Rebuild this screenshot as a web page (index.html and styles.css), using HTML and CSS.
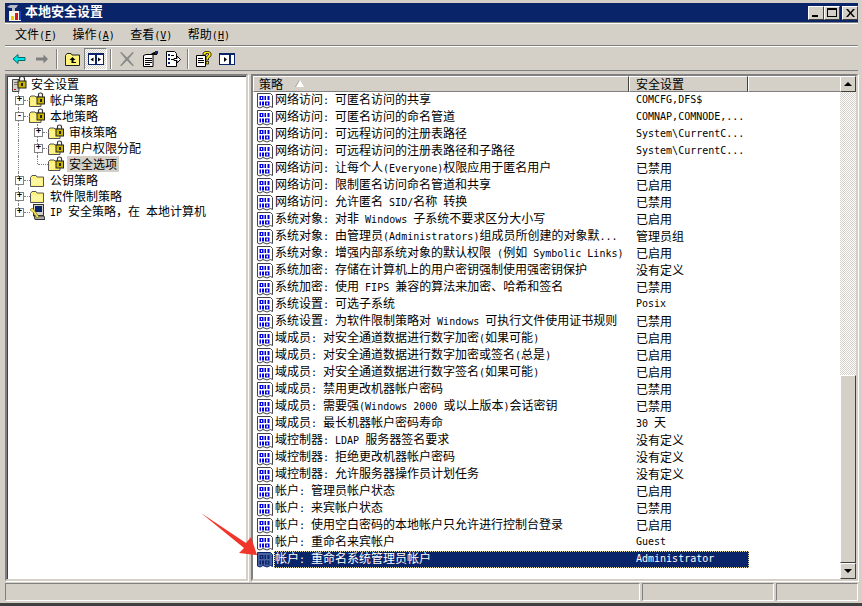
FILE: index.html
```html
<!DOCTYPE html>
<html lang="zh-CN">
<head>
<meta charset="utf-8">
<title>本地安全设置</title>
<link rel="stylesheet" href="styles.css">
</head>
<body>
<svg class="defs" width="0" height="0">
  <symbol id="item" viewBox="0 0 16 16">
    <path d="M.5 .5H13.500L15.500 2.500V14.500L13.500 13.500L10 15L6 13.500L3 15L.5 14Z" fill="var(--paper)" stroke="var(--edge)"/>
    <path d="M3 2.500h4v4H3z M4.500 3.500v2h1v-2z" fill="var(--ink)" fill-rule="evenodd" transform="translate(-.5 .5)"/>
    <path d="M7.500 3h1.500v4H7.500zM10.500 3h2v4h-2z" fill="var(--ink)"/>
    <path d="M2.500 8.500h1.500v4H2.500zM5 8.500h2v4H5z" fill="var(--ink)"/>
    <path d="M8 8.500h4.500v4H8z M9.500 9.500v2h1.500v-2z" fill="var(--ink)" fill-rule="evenodd"/>
  </symbol>
  <symbol id="lockfolder" viewBox="0 0 16 16">
    <path d="M.5 5.500L2 4H6L7 5H12V14.500H.5Z" fill="#ffef70" stroke="#555"/>
    <path d="M2 7h9v6H2z" fill="#fff48c"/>
    <path d="M9.500 5V2.500Q9.500 1 11.500 1T13.500 2.500V5" fill="none" stroke="#333" stroke-width="1.200"/>
    <rect x="8" y="5" width="7.500" height="7" fill="#c8b400" stroke="#222"/>
    <rect x="11" y="7" width="2" height="3" fill="#222"/>
  </symbol>
  <symbol id="folder" viewBox="0 0 16 16">
    <path d="M1.500 5.500L3 3.500H7L8 5H14.500V14.500H1.500Z" fill="#fff27a" stroke="#555"/>
    <path d="M3 7h10v6H3z" fill="#fdf6a0"/>
  </symbol>
  <symbol id="root" viewBox="0 0 16 16">
    <path d="M.5 3.500H7V15.500H.5Z" fill="#d4d0c8" stroke="#444"/>
    <path d="M2 6h4v1H2zM2 8h4v1H2z" fill="#777"/>
    <rect x="2" y="13" width="2" height="1" fill="#d00"/>
    <path d="M7.500 5V2.500Q7.500 .5 10 .5T12.500 2.500V5" fill="none" stroke="#333" stroke-width="1.200"/>
    <rect x="6" y="5" width="8" height="7" fill="#c8b400" stroke="#222"/>
    <rect x="9" y="7" width="2" height="3" fill="#222"/>
  </symbol>
  <symbol id="comp" viewBox="0 0 16 16">
    <rect x="4.500" y=".5" width="10" height="11" fill="#d4d0c8" stroke="#333"/>
    <rect x="6" y="2" width="7" height="6" fill="#0a246a"/>
    <path d="M5 12H15L16 15.500H6Z" fill="#aaa" stroke="#333"/>
    <path d="M1 6L3 4L5 6L10 13L8 14L4 8Z" fill="#ffe84a" stroke="#776600" stroke-width=".6"/>
  </symbol>
</svg>

<div class="window">
  <header class="title">
    <svg class="title-icon" width="17" height="17" viewBox="0 0 17 17">
      <path d="M1 3L4 1H12L10 4H9V8H6V4H4Z" fill="#b4bac8"/>
      <path d="M3 7h12v10H3z" fill="#f8f6e8"/>
      <path d="M5 12h3v4H5z" fill="#e8c800"/>
      <path d="M9 9h3v7H9z" fill="#d81818"/>
      <path d="M13 7h2v9h-2z" fill="#203ec0"/>
    </svg>
    <span class="title-text">本地安全设置</span>
    <div class="caption">
      <button class="cap cap-min"><i></i></button>
      <button class="cap cap-max"><i></i></button>
      <button class="cap cap-close">
        <svg width="9" height="8" viewBox="0 0 9 8"><path d="M0 0h2l2.500 3L7 0h2L5.500 4 9 8H7L4.500 5 2 8H0l3.500-4z" fill="#000"/></svg>
      </button>
    </div>
  </header>

  <nav class="menu">
    <span class="menu-item">文件<span class="l">(<u>F</u>)</span></span>
    <span class="menu-item">操作<span class="l">(<u>A</u>)</span></span>
    <span class="menu-item">查看<span class="l">(<u>V</u>)</span></span>
    <span class="menu-item">帮助<span class="l">(<u>H</u>)</span></span>
  </nav>

  <div class="toolbar">
    <span class="tool">
      <svg width="16" height="16" viewBox="0 0 16 16"><path d="M2 8L7 3.500V6.500H14V9.500H7V12.500Z" fill="#00e4e4" stroke="#006a6a"/></svg>
    </span>
    <span class="tool">
      <svg width="16" height="16" viewBox="0 0 16 16"><path d="M14 8L9.500 3.500V6.500H2V9.500H9.500V12.500Z" fill="#808080"/></svg>
    </span>
    <span class="sep"></span>
    <span class="tool">
      <svg width="16" height="16" viewBox="0 0 16 16"><path d="M.5 4.500L2 2.500H6L7 4H14.500V14.500H.5Z" fill="#fff27a" stroke="#222"/><path d="M7.500 6L4.500 9H6.500V12H11V11H8.500V9H10.500Z" fill="#000"/></svg>
    </span>
    <span class="tool tool-on">
      <svg width="16" height="16" viewBox="0 0 16 16"><rect x=".5" y="2.500" width="15" height="11" fill="#fff" stroke="#0a246a"/><path d="M0 2h16v2H0zM7 2h2v12H7z" fill="#0a246a"/><path d="M5.500 6.500v4l-3-2zM10 6.500v4l3-2z" fill="#000"/></svg>
    </span>
    <span class="sep"></span>
    <span class="tool">
      <svg width="16" height="16" viewBox="0 0 16 16"><path d="M1 1.500L2.500 1L8 6.500L13.500 1L15 1.500L9.500 8L15 14.500L13.500 15L8 9.500L2.500 15L1 14.500L6.500 8Z" fill="#8a8a8a"/></svg>
    </span>
    <span class="tool">
      <svg width="16" height="16" viewBox="0 0 16 16"><path d="M1.500 4.500L4 3.500H11V15.500H1.500Z" fill="#fff" stroke="#000"/><path d="M3 7h7v1H3zM3 9h7v1H3zM3 11h7v1H3zM3 13h5v1H3z" fill="#000"/><path d="M8 3.500L12 1H15V4H12.500" fill="#000"/><rect x="13" y="0" width="3" height="3" fill="#0a246a"/></svg>
    </span>
    <span class="tool">
      <svg width="16" height="16" viewBox="0 0 16 16"><path d="M1.500 .5H9.500L11.500 2.500V15.500H1.500Z" fill="#fff" stroke="#000"/><path d="M3 3h2v2H3zM3 7h2v2H3zM3 11h2v2H3z" fill="#0a246a"/><path d="M6 4h3v1H6zM6 8h3v1H6z" fill="#000"/><path d="M9 7.500H12V5L15.500 8.500L12 12V9.500H9Z" fill="#fff" stroke="#000"/></svg>
    </span>
    <span class="sep"></span>
    <span class="tool">
      <svg width="16" height="16" viewBox="0 0 16 16"><path d="M.5 4.500H9.500V15.500H.5Z" fill="#fff" stroke="#000"/><path d="M2 7h5v1H2zM2 9h6v1H2zM2 11h6v1H2z" fill="#000"/><path d="M7 4V2L9 .5H13L15 2V5L12.500 7V9H10V6L12.500 4V2.500H10V4Z" fill="#ffe800" stroke="#000" stroke-width=".7"/><rect x="10" y="10.500" width="2.500" height="2.500" fill="#ffe800" stroke="#000" stroke-width=".7"/></svg>
    </span>
    <span class="tool">
      <svg width="16" height="16" viewBox="0 0 16 16"><rect x=".5" y="2.500" width="15" height="11" fill="#fff" stroke="#0a246a"/><path d="M0 2h16v2H0zM10 2h2v12h-2z" fill="#0a246a"/><path d="M5 6v5l3-2.500z" fill="#000"/></svg>
    </span>
  </div>

  <main class="panes">
    <aside class="pane tree">
      <div class="node lvl0">
        <svg class="ticon"><use href="#root"/></svg><span class="label">安全设置</span>
      </div>
      <div class="node lvl1 vline">
        <span class="box">+</span><svg class="ticon"><use href="#lockfolder"/></svg><span class="label">帐户策略</span>
      </div>
      <div class="node lvl1 vline">
        <span class="box">-</span><svg class="ticon"><use href="#lockfolder"/></svg><span class="label">本地策略</span>
      </div>
      <div class="node lvl2 vline vline2">
        <span class="box">+</span><svg class="ticon"><use href="#lockfolder"/></svg><span class="label">审核策略</span>
      </div>
      <div class="node lvl2 vline vline2">
        <span class="box">+</span><svg class="ticon"><use href="#lockfolder"/></svg><span class="label">用户权限分配</span>
      </div>
      <div class="node lvl2 vline vline2 last">
        <span class="nobox"></span><svg class="ticon"><use href="#lockfolder"/></svg><span class="label label-sel">安全选项</span>
      </div>
      <div class="node lvl1 vline">
        <span class="box">+</span><svg class="ticon"><use href="#folder"/></svg><span class="label">公钥策略</span>
      </div>
      <div class="node lvl1 vline">
        <span class="box">+</span><svg class="ticon"><use href="#folder"/></svg><span class="label">软件限制策略</span>
      </div>
      <div class="node lvl1 vline last">
        <span class="box">+</span><svg class="ticon"><use href="#comp"/></svg><span class="label"><span class="l">IP </span>安全策略，在<span class="l"> </span>本地计算机</span>
      </div>
    </aside>

    <section class="pane detail">
      <div class="content">
        <div class="head">
          <div class="hcell hcell-name">策略<span class="sort"></span></div>
          <div class="hcell hcell-val">安全设置</div>
          <div class="hcell hcell-rest"></div>
        </div>
        <div class="rows">
          <div class="row"><svg class="ico"><use href="#item"/></svg><div class="cells"><span class="name">网络访问<span class="l">: </span>可匿名访问的共享</span><span class="val l">COMCFG,DFS$</span></div></div>
          <div class="row"><svg class="ico"><use href="#item"/></svg><div class="cells"><span class="name">网络访问<span class="l">: </span>可匿名访问的命名管道</span><span class="val l">COMNAP,COMNODE,...</span></div></div>
          <div class="row"><svg class="ico"><use href="#item"/></svg><div class="cells"><span class="name">网络访问<span class="l">: </span>可远程访问的注册表路径</span><span class="val l">System\CurrentC...</span></div></div>
          <div class="row"><svg class="ico"><use href="#item"/></svg><div class="cells"><span class="name">网络访问<span class="l">: </span>可远程访问的注册表路径和子路径</span><span class="val l">System\CurrentC...</span></div></div>
          <div class="row"><svg class="ico"><use href="#item"/></svg><div class="cells"><span class="name">网络访问<span class="l">: </span>让每个人<span class="l">(Everyone)</span>权限应用于匿名用户</span><span class="val">已禁用</span></div></div>
          <div class="row"><svg class="ico"><use href="#item"/></svg><div class="cells"><span class="name">网络访问<span class="l">: </span>限制匿名访问命名管道和共享</span><span class="val">已启用</span></div></div>
          <div class="row"><svg class="ico"><use href="#item"/></svg><div class="cells"><span class="name">网络访问<span class="l">: </span>允许匿名<span class="l"> SID/</span>名称<span class="l"> </span>转换</span><span class="val">已禁用</span></div></div>
          <div class="row"><svg class="ico"><use href="#item"/></svg><div class="cells"><span class="name">系统对象<span class="l">: </span>对非<span class="l"> Windows </span>子系统不要求区分大小写</span><span class="val">已启用</span></div></div>
          <div class="row"><svg class="ico"><use href="#item"/></svg><div class="cells"><span class="name">系统对象<span class="l">: </span>由管理员<span class="l">(Administrators)</span>组成员所创建的对象默<span class="l">...</span></span><span class="val">管理员组</span></div></div>
          <div class="row"><svg class="ico"><use href="#item"/></svg><div class="cells"><span class="name">系统对象<span class="l">: </span>增强内部系统对象的默认权限<span class="l"> (</span>例如<span class="l"> Symbolic Links)</span></span><span class="val">已启用</span></div></div>
          <div class="row"><svg class="ico"><use href="#item"/></svg><div class="cells"><span class="name">系统加密<span class="l">: </span>存储在计算机上的用户密钥强制使用强密钥保护</span><span class="val">没有定义</span></div></div>
          <div class="row"><svg class="ico"><use href="#item"/></svg><div class="cells"><span class="name">系统加密<span class="l">: </span>使用<span class="l"> FIPS </span>兼容的算法来加密、哈希和签名</span><span class="val">已禁用</span></div></div>
          <div class="row"><svg class="ico"><use href="#item"/></svg><div class="cells"><span class="name">系统设置<span class="l">: </span>可选子系统</span><span class="val l">Posix</span></div></div>
          <div class="row"><svg class="ico"><use href="#item"/></svg><div class="cells"><span class="name">系统设置<span class="l">: </span>为软件限制策略对<span class="l"> Windows </span>可执行文件使用证书规则</span><span class="val">已禁用</span></div></div>
          <div class="row"><svg class="ico"><use href="#item"/></svg><div class="cells"><span class="name">域成员<span class="l">: </span>对安全通道数据进行数字加密<span class="l">(</span>如果可能<span class="l">)</span></span><span class="val">已启用</span></div></div>
          <div class="row"><svg class="ico"><use href="#item"/></svg><div class="cells"><span class="name">域成员<span class="l">: </span>对安全通道数据进行数字加密或签名<span class="l">(</span>总是<span class="l">)</span></span><span class="val">已启用</span></div></div>
          <div class="row"><svg class="ico"><use href="#item"/></svg><div class="cells"><span class="name">域成员<span class="l">: </span>对安全通道数据进行数字签名<span class="l">(</span>如果可能<span class="l">)</span></span><span class="val">已启用</span></div></div>
          <div class="row"><svg class="ico"><use href="#item"/></svg><div class="cells"><span class="name">域成员<span class="l">: </span>禁用更改机器帐户密码</span><span class="val">已禁用</span></div></div>
          <div class="row"><svg class="ico"><use href="#item"/></svg><div class="cells"><span class="name">域成员<span class="l">: </span>需要强<span class="l">(Windows 2000 </span>或以上版本<span class="l">)</span>会话密钥</span><span class="val">已禁用</span></div></div>
          <div class="row"><svg class="ico"><use href="#item"/></svg><div class="cells"><span class="name">域成员<span class="l">: </span>最长机器帐户密码寿命</span><span class="val"><span class="l">30 </span>天</span></div></div>
          <div class="row"><svg class="ico"><use href="#item"/></svg><div class="cells"><span class="name">域控制器<span class="l">: LDAP </span>服务器签名要求</span><span class="val">没有定义</span></div></div>
          <div class="row"><svg class="ico"><use href="#item"/></svg><div class="cells"><span class="name">域控制器<span class="l">: </span>拒绝更改机器帐户密码</span><span class="val">没有定义</span></div></div>
          <div class="row"><svg class="ico"><use href="#item"/></svg><div class="cells"><span class="name">域控制器<span class="l">: </span>允许服务器操作员计划任务</span><span class="val">没有定义</span></div></div>
          <div class="row"><svg class="ico"><use href="#item"/></svg><div class="cells"><span class="name">帐户<span class="l">: </span>管理员帐户状态</span><span class="val">已启用</span></div></div>
          <div class="row"><svg class="ico"><use href="#item"/></svg><div class="cells"><span class="name">帐户<span class="l">: </span>来宾帐户状态</span><span class="val">已禁用</span></div></div>
          <div class="row"><svg class="ico"><use href="#item"/></svg><div class="cells"><span class="name">帐户<span class="l">: </span>使用空白密码的本地帐户只允许进行控制台登录</span><span class="val">已启用</span></div></div>
          <div class="row"><svg class="ico"><use href="#item"/></svg><div class="cells"><span class="name">帐户<span class="l">: </span>重命名来宾帐户</span><span class="val l">Guest</span></div></div>
          <div class="row sel"><svg class="ico"><use href="#item"/></svg><div class="cells"><span class="name">帐户<span class="l">: </span>重命名系统管理员帐户</span><span class="val l">Administrator</span></div></div>
        </div>
      </div>
      <div class="vscroll">
        <div class="sbtn"><b class="up"></b></div>
        <div class="track"></div>
        <div class="thumb"></div>
        <div class="sbtn"><b class="down"></b></div>
      </div>
    </section>
  </main>

  <footer class="status">
    <div class="panel panel-a"></div>
    <div class="panel panel-b"></div>
    <div class="panel panel-c"></div>
  </footer>

  <svg class="arrow" width="60" height="46" viewBox="0 0 60 46">
    <path d="M1 1L46 31L51 25L57 43L39 41L44 36Z" fill="#f0352a"/>
  </svg>
</div>
</body>
</html>
```

FILE: styles.css
```css
* { box-sizing: border-box; }
html, body { margin: 0; padding: 0; }
body {
  width: 862px;
  height: 606px;
  overflow: hidden;
  font-family: "Noto Sans CJK SC", "Liberation Sans", sans-serif;
  font-size: 12px;
  color: #000;
  background: #d4d0c8;
}
.defs { position: absolute; }
.l { font-family: "DejaVu Sans Mono", "Liberation Mono", monospace; font-size: 10px; white-space: pre; }

.window {
  position: relative;
  width: 862px;
  height: 606px;
  padding: 3px 4px 0 5px;
  display: flex;
  flex-direction: column;
  background: #d4d0c8;
  border-bottom: 3px solid #404040;
}

/* title */
.title {
  height: 19px;
  flex: none;
  display: flex;
  align-items: center;
  background: #0a246a;
  color: #fff;
}
.title-icon { margin-left: 1px; flex: none; }
.title-text { margin-left: 2px; padding-bottom: 3px; font-size: 13px; font-weight: 700; line-height: 18px; }
.caption { margin-left: auto; display: flex; }
.cap {
  width: 16px;
  height: 14px;
  padding: 0;
  background: #d4d0c8;
  border: 1px solid;
  border-color: #fff #404040 #404040 #fff;
  display: flex;
  align-items: center;
  justify-content: center;
}
.cap-close { margin-left: 2px; }
.cap-min i { width: 6px; height: 2px; background: #000; margin-top: 6px; margin-right: 2px; }
.cap-max i { width: 10px; height: 9px; border: 1px solid #000; border-top-width: 2px; }

/* menu */
.menu {
  height: 24px;
  flex: none;
  display: flex;
  align-items: center;
  padding: 1px 0 0 10px;
  gap: 15.5px;
  border-top: 1px solid #808080;
  box-shadow: inset 0 1px 0 #fff;
  border-bottom: 1px solid #808080;
}
.menu-item { line-height: 16px; white-space: pre; }

/* toolbar */
.toolbar {
  height: 25px;
  flex: none;
  display: flex;
  align-items: center;
  padding-left: 2px;
  border-top: 1px solid #fff;
  border-bottom: 1px solid #808080;
}
.tool {
  width: 23px;
  height: 22px;
  flex: none;
  display: flex;
  align-items: center;
  justify-content: center;
}
.tool-on {
  border: 1px solid;
  border-color: #808080 #fff #fff #808080;
  background: repeating-conic-gradient(#fff 0 25%, #d4d0c8 0 50%) 0 0 / 2px 2px;
}
.sep {
  width: 2px;
  height: 20px;
  flex: none;
  margin: 0 3px;
  border-left: 1px solid #808080;
  border-right: 1px solid #fff;
}

/* panes */
.panes {
  height: 507px;
  margin-top: 3px;
  flex: none;
  display: flex;
  gap: 3px;
}
.pane {
  background: #fff;
  border: 2px solid;
  border-color: #808080 #d4d0c8 #d4d0c8 #808080;
  box-shadow: inset 1px 1px 0 #404040, 1px 1px 0 #fff;
}
.tree {
  width: 243px;
  padding: 0 0 0 5px;
  flex: none;
}
.node {
  position: relative;
  height: 16px;
  display: flex;
  align-items: center;
  white-space: pre;
}
.lvl1 { padding-left: 3px; }
.lvl2 { padding-left: 22px; }
.ticon { width: 16px; height: 16px; flex: none; }
.label { margin-left: 3px; padding: 0 2px; line-height: 16px; }
.lvl0 .label { margin-left: 1px; }
.label-sel { background: #d4d0c8; }
.box {
  position: relative;
  width: 9px;
  height: 9px;
  flex: none;
  margin-right: 5px;
  border: 1px solid #808080;
  background: #fff;
  font: 700 9px/6px "Liberation Mono", monospace;
  text-align: center;
  z-index: 1;
}
.box::after {
  content: "";
  position: absolute;
  left: 8px;
  top: 3px;
  width: 6px;
  border-top: 1px dotted #808080;
}
.nobox {
  width: 10px;
  height: 1px;
  flex: none;
  border-top: 1px dotted #808080;
  margin-left: 4px;
}
.vline::before {
  content: "";
  position: absolute;
  left: 6px;
  top: 0;
  height: 16px;
  border-left: 1px dotted #808080;
}
.vline.lvl1.last::before { height: 8px; }
.vline2::after {
  content: "";
  position: absolute;
  left: 25px;
  top: 0;
  height: 16px;
  border-left: 1px dotted #808080;
}
.vline2.last::after { height: 8px; }

.detail {
  flex: 1;
  display: flex;
  min-width: 0;
}
.content { flex: 1; min-width: 0; display: flex; flex-direction: column; }
.head { height: 16px; flex: none; display: flex; background: #d4d0c8; }
.hcell {
  height: 16px;
  line-height: 13px;
  border: 1px solid;
  border-color: #fff #404040 #808080 #fff;
  white-space: pre;
}
.hcell-name { width: 376px; padding: 0 0 1px 5px; display: flex; align-items: center; }
.hcell-val { width: 119px; padding-left: 6px; }
.hcell-rest { flex: 1; border-right: 0; border-bottom-color: #808080; }
.sort {
  width: 0;
  height: 0;
  margin-left: 13px;
  border: 4px solid transparent;
  border-top: 0;
  border-bottom: 7px solid #fff;
  filter: drop-shadow(-1px 0 0 #a0a0a0);
}
.rows { flex: 1; overflow: hidden; background: #fff; }
.row {
  --paper: #fff;
  --edge: #444;
  --ink: #0000e0;
  height: 17px;
  display: flex;
  align-items: center;
  padding-left: 4px;
}
.ico { width: 16px; height: 16px; flex: none; }
.cells {
  width: 475px;
  height: 17px;
  margin-left: 1px;
  display: flex;
  align-items: center;
  white-space: pre;
  line-height: 15px;
}
.name { width: 355px; padding: 0 0 2px 1px; flex: none; }
.val { padding: 0 0 2px 7px; flex: 1; }
.sel { --paper: #4a64a4; --edge: #0a246a; --ink: #0a246a; }
.sel .cells {
  background: #0a246a;
  color: #fff;
  outline: 1px dotted #e8e0a0;
  outline-offset: -1px;
}

/* scrollbar */
.vscroll { width: 16px; flex: none; display: flex; flex-direction: column; }
.sbtn {
  height: 16px;
  flex: none;
  display: flex;
  align-items: center;
  justify-content: center;
  background: #d4d0c8;
  border: 1px solid;
  border-color: #fff #404040 #404040 #fff;
}
.up, .down { width: 0; height: 0; border: 4px solid transparent; }
.up { border-top: 0; border-bottom-color: #000; }
.down { border-bottom: 0; border-top-color: #000; }
.track {
  flex: 1;
  background: repeating-conic-gradient(#fff 0 25%, #d4d0c8 0 50%) 0 0 / 2px 2px;
}
.thumb {
  height: 188px;
  flex: none;
  background: #d4d0c8;
  border: 1px solid;
  border-color: #fff #404040 #404040 #fff;
}

/* status */
.status {
  margin-top: 2px;
  height: 18px;
  flex: none;
  display: flex;
  gap: 2px;
}
.panel {
  border: 1px solid;
  border-color: #808080 #fff #fff #808080;
}
.panel-a { width: 635px; }
.panel-b { width: 132px; }
.panel-c { flex: 1; }

/* annotation */
.arrow { position: absolute; left: 200px; top: 512px; }
```
